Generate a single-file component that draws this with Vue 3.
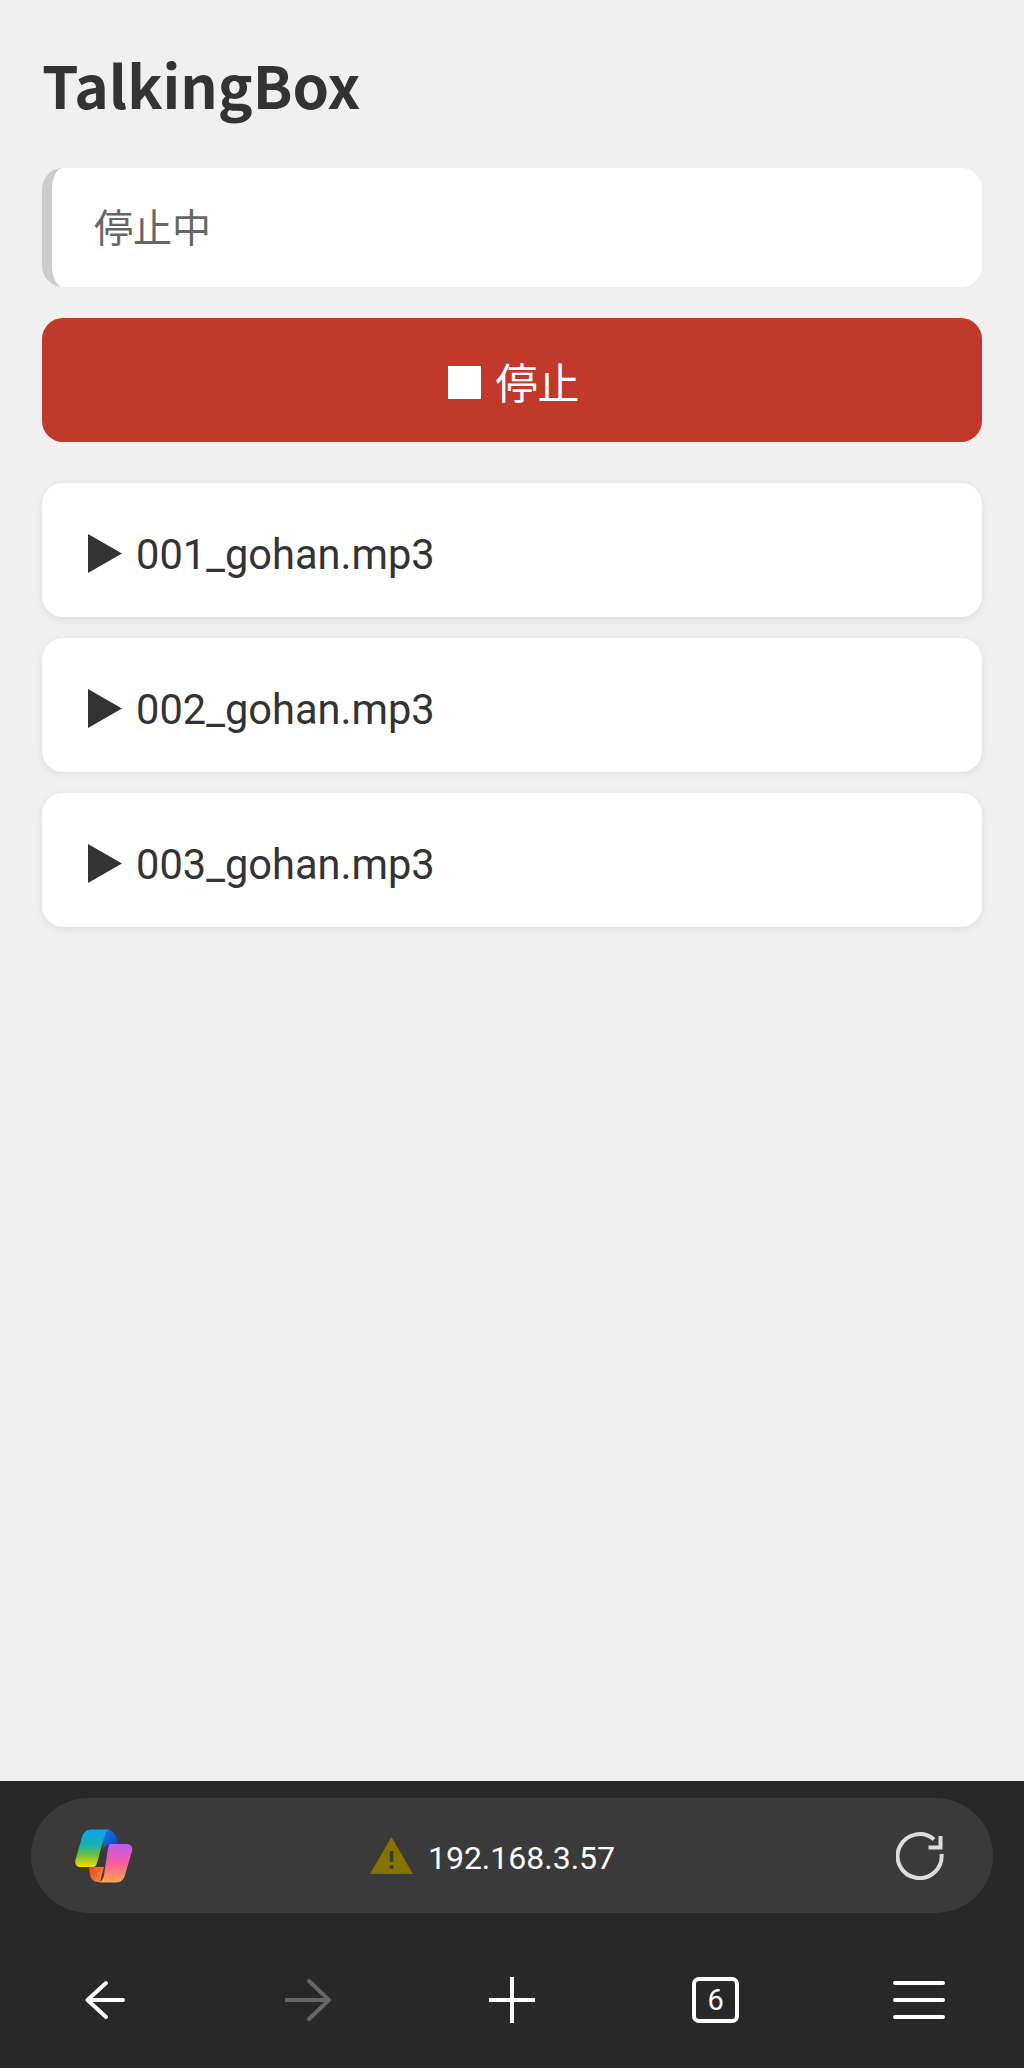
<template>
    <div class="page">
        <main class="content">
            <h1>TalkingBox</h1>
            <div class="status">停止中</div>
            <button class="stop">
                <span class="stop-mark"></span>
                <span>停止</span>
            </button>
            <ul class="tracks">
                <li class="track" v-for="track in tracks" :key="track">
                    <svg class="play" width="34" height="39" viewBox="0 0 34 39">
                        <path d="M0 0L34 19.5L0 39Z" fill="#333" />
                    </svg>
                    <span>{{ track }}</span>
                </li>
            </ul>
        </main>

        <footer class="browser">
            <div class="address-bar">
                <svg class="copilot" width="58" height="54" viewBox="0 0 58 54">
                    <defs>
                        <linearGradient id="ribbonLeft" x1="0" y1="0" x2="0" y2="1">
                            <stop offset="0" stop-color="#0ca4f5" />
                            <stop offset="0.4" stop-color="#14b0b4" />
                            <stop offset="0.68" stop-color="#6cc03c" />
                            <stop offset="1" stop-color="#f8dc00" />
                        </linearGradient>
                        <linearGradient id="ribbonRight" x1="0" y1="0" x2="0" y2="1">
                            <stop offset="0" stop-color="#b85ef0" />
                            <stop offset="0.5" stop-color="#f85ca0" />
                            <stop offset="1" stop-color="#ffa644" />
                        </linearGradient>
                        <linearGradient id="ribbonBlue" x1="0" y1="0" x2="1" y2="1">
                            <stop offset="0" stop-color="#0f7fe0" />
                            <stop offset="1" stop-color="#1239c0" />
                        </linearGradient>
                        <linearGradient id="ribbonRed" x1="0" y1="0" x2="1" y2="0.6">
                            <stop offset="0" stop-color="#f0401f" />
                            <stop offset="1" stop-color="#ff8a35" />
                        </linearGradient>
                    </defs>
                    <path d="M29 1H33C38 1 40 5 42 9L44 16H35C31 16 29 17 28 20Z" fill="url(#ribbonBlue)" />
                    <path d="M14 38H29L25 53H23C19 53 16 50 15 46Z" fill="url(#ribbonRed)" />
                    <path d="M17 0.500H34C31 2 30 5 29 9L22 34C21 37 20 38 17 38H5C1.500 38 -0.500 35 0.500 31L7 8C8.500 3 12 0.500 17 0.500Z" fill="url(#ribbonLeft)" />
                    <path d="M35 15H52C56 15 58 18 57 22L50 46C49 50 46 53.500 41 53.500H24C27 52 28 50 29 46L32 26C33 20 33 17 35 15Z" fill="url(#ribbonRight)" />
                </svg>
                <div class="address">
                    <svg width="43" height="38" viewBox="0 0 43 38">
                        <path d="M21.500 0L43 37H0Z" fill="#857300" />
                        <path d="M21.500 14V25" stroke="#3a3a3a" stroke-width="3.500" />
                        <circle cx="21.500" cy="30" r="2" fill="#3a3a3a" />
                    </svg>
                    <span class="host">192.168.3.57</span>
                </div>
                <svg class="reload" width="48" height="48" viewBox="0 0 48 48" fill="none" stroke="#ddd" stroke-width="4">
                    <path d="M45.500 22A22 22 0 1 1 38 7.500" />
                    <path d="M44.500 4V15.500H32.500" />
                </svg>
            </div>
            <nav class="toolbar">
                <svg width="46" height="46" viewBox="0 0 46 46" fill="none" stroke="#fff" stroke-width="4" stroke-linecap="round" stroke-linejoin="round">
                    <path d="M41 23H6M24 6L5.500 23L24 40" />
                </svg>
                <svg width="46" height="46" viewBox="0 0 46 46" fill="none" stroke="#666" stroke-width="4" stroke-linecap="round" stroke-linejoin="round">
                    <path d="M1 23H44M24 4L44 23L24 42" />
                </svg>
                <svg width="46" height="46" viewBox="0 0 46 46" fill="none" stroke="#fff" stroke-width="4">
                    <path d="M0 23H46M23 0V46" />
                </svg>
                <span class="tabs">6</span>
                <svg width="52" height="46" viewBox="0 0 52 46" fill="none" stroke="#fff" stroke-width="4" stroke-linecap="round">
                    <path d="M2 6H50M2 23H50M2 40H50" />
                </svg>
            </nav>
        </footer>
    </div>
</template>

<script setup>
const tracks = ['001_gohan.mp3', '002_gohan.mp3', '003_gohan.mp3'];
</script>

<style scoped>
.page {
    display: flex;
    flex-direction: column;
    min-height: 2068px;
    background-color: #f0f0f0;
    font-family: "Noto Sans CJK JP", "Noto Sans", sans-serif;
}

.content {
    flex: 1;
    padding: 42px 42px 0;
}

h1 {
    margin: 0 0 42px;
    font-size: 58.500px;
    line-height: 84px;
    font-weight: 700;
    color: #333;
}

.status {
    box-sizing: border-box;
    height: 119px;
    padding: 0 0 6px 42px;
    display: flex;
    align-items: center;
    background-color: #fff;
    border-left: 10px solid #ccc;
    border-radius: 21px;
    font-size: 39px;
    color: #666;
}

.stop {
    display: flex;
    align-items: center;
    justify-content: center;
    gap: 14px;
    width: 100%;
    height: 124px;
    margin-top: 31px;
    padding: 0 0 0 4px;
    border: none;
    border-radius: 21px;
    background-color: #c0392b;
    color: #fff;
    font-family: inherit;
    font-size: 42px;
}

.stop-mark {
    width: 33px;
    height: 33px;
    margin-top: 5px;
    background-color: #fff;
}

.tracks {
    list-style: none;
    margin: 41px 0 0;
    padding: 0;
    display: flex;
    flex-direction: column;
    gap: 21px;
}

.track {
    box-sizing: border-box;
    display: flex;
    align-items: center;
    gap: 14px;
    height: 134px;
    padding: 8px 0 0 46px;
    background-color: #fff;
    border-radius: 21px;
    box-shadow: 0 2px 8px rgba(0, 0, 0, 0.08);
    font-family: Roboto, sans-serif;
    font-size: 41.600px;
    color: #333;
}

.play {
    margin-bottom: 2px;
}

.browser {
    background-color: #282828;
    padding-top: 17px;
}

.address-bar {
    display: flex;
    align-items: center;
    height: 115px;
    margin: 0 31px;
    padding: 0 49px 0 44px;
    background-color: #3a3a3a;
    border-radius: 58px;
}

.address {
    flex: 1;
    display: flex;
    align-items: center;
    justify-content: center;
    gap: 15px;
    padding: 0 44px 0 0;
    font-family: Roboto, sans-serif;
    font-size: 32px;
    color: #fff;
}

.host {
    margin-top: 5px;
}

.toolbar {
    display: grid;
    grid-template-columns: repeat(5, 1fr);
    justify-items: center;
    align-items: center;
    padding: 64px 3px 45px;
}

.tabs {
    box-sizing: border-box;
    width: 47px;
    height: 46px;
    display: flex;
    align-items: center;
    justify-content: center;
    border: 4px solid #fff;
    border-radius: 7px;
    font-family: Roboto, sans-serif;
    font-size: 29px;
    color: #fff;
}
</style>
